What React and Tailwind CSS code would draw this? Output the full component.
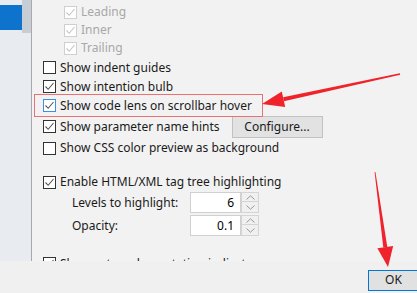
import React from 'react';

function Check({ checked, disabled, focus }) {
  const border = disabled ? 'border-[#cfcfcf]' : focus ? 'border-[#3c8ee0]' : 'border-[#333333]';
  return (
    <span className={`flex h-[13px] w-[13px] shrink-0 items-center justify-center border bg-white ${border}`}>
      {checked && (
        <svg width="11" height="11" viewBox="0 0 11 11">
          <polyline
            points="1.5,5.5 4.2,8.3 9.5,2"
            fill="none"
            stroke={disabled ? '#c4c4c4' : '#555'}
            strokeWidth="1.1"
          />
        </svg>
      )}
    </span>
  );
}

function Row({ label, checked, disabled, focus, indent, h = 'h-[19px]', children }) {
  return (
    <div className={`flex items-center ${h} ${indent ? 'pl-[32px]' : 'pl-[11px]'}`}>
      <Check checked={checked} disabled={disabled} focus={focus} />
      <span className={`ml-[4px] whitespace-nowrap ${disabled ? 'text-[#a8a8a8]' : 'text-[#1a1a1a]'}`}>{label}</span>
      {children}
    </div>
  );
}

function Spinner({ value }) {
  return (
    <div className="flex h-[21px]">
      <div className="flex w-[51px] items-center justify-end border border-[#d0d0d0] bg-white pr-[6px]">{value}</div>
      <div className="flex w-[18px] flex-col">
        <div className="flex h-[10px] items-center justify-center border border-[#d4d4d4] bg-[#f0f0f0]">
          <svg width="9" height="5" viewBox="0 0 9 5"><polyline points="0.5,4.5 4.5,0.8 8.5,4.5" fill="none" stroke="#999" /></svg>
        </div>
        <div className="flex h-[11px] items-center justify-center border border-t-0 border-[#d4d4d4] bg-[#f0f0f0]">
          <svg width="9" height="5" viewBox="0 0 9 5"><polyline points="0.5,0.5 4.5,4.2 8.5,0.5" fill="none" stroke="#999" /></svg>
        </div>
      </div>
    </div>
  );
}

export default function App() {
  return (
    <div className="relative h-[293px] w-[417px] overflow-hidden bg-[#f0f0f0] text-[12px] font-['Noto_Sans',sans-serif]">
      <div className="flex h-[261px]">
        {/* Left tree panel */}
        <div className="relative w-[32px] shrink-0 border-r border-[#a9a9a9] bg-[#e8ecf0]">
          <div className="mt-[5px] h-[25px] w-[22px] bg-[#0e73cc]" />
          <div className="absolute right-0 top-0 h-[33px] w-[9px] bg-[#b9c0c8]/70" />
        </div>

        {/* Settings content */}
        <div className="flex-1 overflow-hidden bg-[#f2f2f2] pt-[3px]">
          <Row label="Leading" checked disabled indent h="h-[18px]" />
          <Row label="Inner" checked disabled indent h="h-[18px]" />
          <Row label="Trailing" checked disabled indent h="h-[18px]" />
          <div className="h-[1px]" />
          <Row label="Show indent guides" />
          <Row label="Show intention bulb" checked />
          <Row label="Show code lens on scrollbar hover" checked focus />
          <Row label="Show parameter name hints" checked h="h-[23px]">
            <button className="ml-[12px] h-[22px] w-[91px] border border-[#c2c2c2] bg-[#e2e2e2] text-[#1a1a1a]">Configure...</button>
          </Row>
          <Row label="Show CSS color preview as background" h="h-[20px]" />
          <div className="h-[14px]" />
          <Row label="Enable HTML/XML tag tree highlighting" checked h="h-[20px]" />
          <div className="flex h-[21px] items-center pl-[40px]">
            <span className="w-[118px] text-[#1a1a1a]">Levels to highlight:</span>
            <Spinner value="6" />
          </div>
          <div className="h-[2px]" />
          <div className="flex h-[21px] items-center pl-[40px]">
            <span className="w-[118px] text-[#1a1a1a]">Opacity:</span>
            <Spinner value="0.1" />
          </div>
          <div className="h-[18px]" />
          <Row label="Show external annotation indicators" checked />
        </div>
      </div>

      {/* Bottom button bar */}
      <div className="flex h-[32px] items-center justify-end pt-[6px]">
        <button className="-mr-[2px] h-[21px] w-[51px] border border-[#0078d7] bg-[#e1e1e1] text-[#1a1a1a]">OK</button>
      </div>

      {/* Annotations */}
      <div className="absolute left-[34px] top-[94px] h-[23px] w-[229px] border border-[#ec6f74]" />
      <svg className="pointer-events-none absolute left-0 top-0" width="417" height="293" viewBox="0 0 417 293">
        <polygon points="399.8,73.3 400.2,74.7 283.9,101.3 283.1,97.3" fill="#f0222b" />
        <polygon points="262,104 281.8,91.5 285.2,107.1" fill="#f0222b" />
        <polygon points="374.6,172 375.4,172 387.3,246.9 383.3,247.5" fill="#f0222b" />
        <polygon points="388,267 377.4,248.3 393.2,246.1" fill="#f0222b" />
      </svg>
    </div>
  );
}
